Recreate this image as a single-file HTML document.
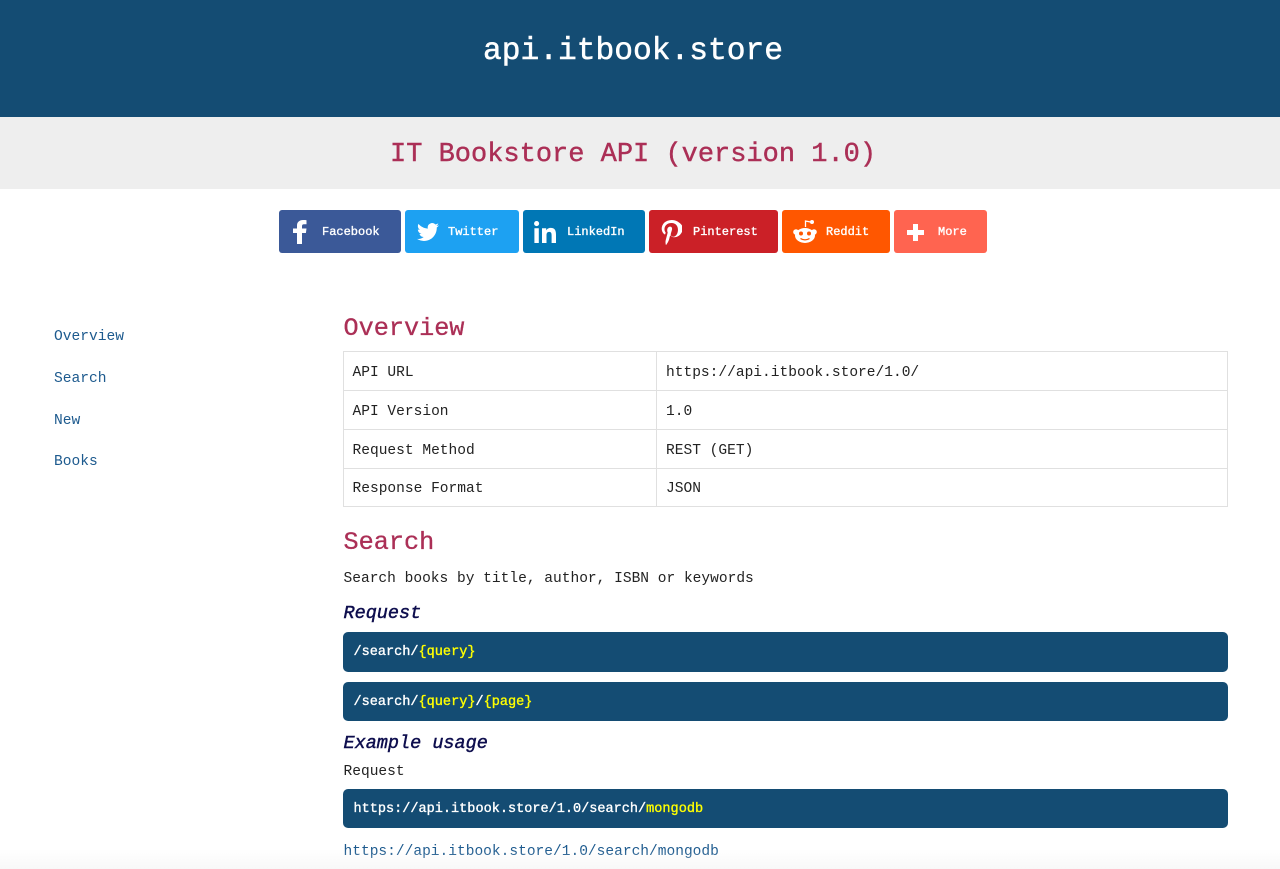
<!DOCTYPE html>
<html><head><meta charset="utf-8"><title>api.itbook.store</title>
<style>
*{box-sizing:border-box}
html,body{margin:0;padding:0;background:#fff;overflow:hidden}
body{width:1280px;height:869px;position:relative;font-family:"Liberation Mono",monospace;color:#333}
.a{position:absolute;white-space:pre;line-height:1}
.box{position:absolute}
.btn{position:absolute;top:210px;height:43px;border-radius:3px}
.btn span{position:absolute;top:15.5px;font-size:12px;line-height:12px;font-weight:normal;-webkit-text-stroke:.35px #fff;color:#fff;white-space:pre}
.btn svg{position:absolute;fill:#fff}
.nav{left:54px;font-size:14.6px;color:#1d5a8e}
h2{margin:0;position:absolute;left:343.5px;font-size:25.2px;line-height:1;font-weight:normal;color:#ab2f56;-webkit-text-stroke:.3px #ab2f56}
h3{margin:0;position:absolute;left:343.5px;font-size:18.5px;line-height:1;font-weight:normal;font-style:italic;color:#0d0d4d;-webkit-text-stroke:.45px #0d0d4d}
.t{font-size:14.55px;color:#222}
.code{position:absolute;left:343px;width:885px;background:#144c73;border-radius:5px}
.code span{position:absolute;left:10.5px;font-size:13.55px;line-height:14px;font-weight:normal;-webkit-text-stroke:.35px #fff;color:#fff;white-space:pre}
.code b{color:#ffff00;-webkit-text-stroke:.35px #ffff00;font-weight:normal}
.h{position:absolute;background:#e0e0e0;height:1px;left:343px;width:885px}
.v{position:absolute;background:#e0e0e0;width:1px;top:351px;height:156px}
</style></head><body>
<div class="box" style="left:0;top:0;width:1280px;height:117px;background:#144c73"></div>
<div class="a" style="left:483px;top:36px;font-size:31.25px;color:#fff;-webkit-text-stroke:.5px #fff">api.itbook.store</div>
<div class="box" style="left:0;top:117px;width:1280px;height:72px;background:#eee"></div>
<div class="a" style="left:390px;top:142px;font-size:27px;color:#ab2f56;-webkit-text-stroke:.4px #ab2f56">IT Bookstore API (version 1.0)</div>

<div class="btn" style="left:279px;width:122px;background:#3b5998">
<svg style="left:14px;top:10px" width="14" height="24" viewBox="0 0 14 24"><path d="M4 24V13H0V8.500h4V5.500C4 2 6.500 0 10 0c1.500 0 3 .1 3.500.2v4H11c-1.500 0-2 .8-2 2V8.500h4.500l-.6 4.500H9v11z"/></svg>
<span style="left:43px">Facebook</span></div>
<div class="btn" style="left:405px;width:114px;background:#1da1f2">
<svg style="left:12px;top:11px" width="22" height="22" viewBox="0 0 24 24"><path d="M23.950 4.570a10 10 0 0 1-2.820.77 4.960 4.960 0 0 0 2.160-2.720c-.95.550-2 .96-3.130 1.190a4.920 4.920 0 0 0-8.380 4.480C7.690 8.090 4.070 6.130 1.640 3.160a4.820 4.820 0 0 0-.67 2.480c0 1.710.87 3.210 2.190 4.100a4.900 4.900 0 0 1-2.230-.62v.06c0 2.390 1.700 4.380 3.950 4.830a5 5 0 0 1-2.210.08 4.940 4.940 0 0 0 4.610 3.420A9.870 9.870 0 0 1 0 19.540a14 14 0 0 0 7.560 2.210c9.050 0 14-7.500 14-13.980 0-.21 0-.42-.02-.63a9.900 9.900 0 0 0 2.410-2.570z"/></svg>
<span style="left:43px">Twitter</span></div>
<div class="btn" style="left:523px;width:122px;background:#0077b5">
<svg style="left:11px;top:11px" width="22" height="22" viewBox="0 0 22 22"><path d="M.4 7.300h4.400V22H.4zM2.600 0a2.500 2.500 0 1 1 0 5.100 2.500 2.500 0 0 1 0-5.100zM8 7.300h4.200v2h.1c.6-1.100 2.100-2.400 4.300-2.400 4.600 0 5.400 3 5.400 7V22h-4.400v-7.200c0-1.700 0-3.900-2.400-3.900s-2.700 1.800-2.700 3.800V22H8z"/></svg>
<span style="left:44px">LinkedIn</span></div>
<div class="btn" style="left:649px;width:129px;background:#cb2027">
<svg style="left:12px;top:9.500px" width="21" height="25" viewBox="0 0 21 25"><path d="M10.900 0C4.300 0 .7 4.200.7 8.800c0 2.100 1.200 4.800 3 5.600.5.200.5 0 .9-1.700 0-.1 0-.3-.1-.4C2 9.200 4 3 10.500 3c9.200 0 7.500 13.700 1.600 13.700-1.500 0-2.700-1.200-2.300-2.800.4-1.800 1.300-3.800 1.300-5.100 0-3.300-4.900-2.800-4.900 1.500 0 1.400.5 2.300.5 2.300S5 19 4.700 20.300c-.5 2.100.1 4.300.1 4.500.1.200.3.200.4.100.2-.2 2.300-3.200 2.900-5.500.2-.8 1.100-4.200 1.100-4.200.6 1.100 2.200 2 3.900 2 5.200 0 8.900-4.600 8.900-10.100C20 3.100 15.500 0 10.900 0z"/></svg>
<span style="left:44px">Pinterest</span></div>
<div class="btn" style="left:782px;width:108px;background:#ff5700">
<svg style="left:11px;top:9px" width="24" height="25" viewBox="0 0 24 25"><path d="M12.500 8V2l5 1" fill="none" stroke="#fff" stroke-width="1.300"/><circle cx="19" cy="3" r="2"/><ellipse cx="12" cy="16.500" rx="10" ry="7.500"/><circle cx="3" cy="13" r="2.800"/><circle cx="21" cy="13" r="2.800"/><circle cx="8" cy="14.500" r="2" fill="#ff5700"/><circle cx="16" cy="14.500" r="2" fill="#ff5700"/><path d="M7.500 19.500c2.500 1.800 6.500 1.800 9 0" fill="none" stroke="#ff5700" stroke-width="1.300"/></svg>
<span style="left:44px">Reddit</span></div>
<div class="btn" style="left:894px;width:93px;background:#ff6450">
<svg style="left:13px;top:13.500px" width="17" height="17" viewBox="0 0 17 17"><path d="M6 0h5v6h6v5h-6v6H6v-6H0V6h6z"/></svg>
<span style="left:44px">More</span></div>

<div class="a nav" style="top:330px">Overview</div>
<div class="a nav" style="top:372px">Search</div>
<div class="a nav" style="top:414px">New</div>
<div class="a nav" style="top:455px">Books</div>

<h2 style="top:316px">Overview</h2>
<div class="h" style="top:351px"></div><div class="h" style="top:390px"></div><div class="h" style="top:429px"></div><div class="h" style="top:468px"></div><div class="h" style="top:506px"></div>
<div class="v" style="left:343px"></div><div class="v" style="left:656px"></div><div class="v" style="left:1227px"></div>
<div class="a t" style="left:352.500px;top:366px">API URL</div>
<div class="a t" style="left:666px;top:366px">https://api.itbook.store/1.0/</div>
<div class="a t" style="left:352.500px;top:405px">API Version</div>
<div class="a t" style="left:666px;top:405px">1.0</div>
<div class="a t" style="left:352.500px;top:444px">Request Method</div>
<div class="a t" style="left:666px;top:444px">REST (GET)</div>
<div class="a t" style="left:352.500px;top:482px">Response Format</div>
<div class="a t" style="left:666px;top:482px">JSON</div>

<h2 style="top:530px">Search</h2>
<div class="a t" style="left:343.500px;top:572px">Search books by title, author, ISBN or keywords</div>
<h3 style="top:604.500px">Request</h3>
<div class="code" style="top:632px;height:40px"><span style="top:14px">/search/<b>{query}</b></span></div>
<div class="code" style="top:682px;height:39px"><span style="top:14px">/search/<b>{query}</b>/<b>{page}</b></span></div>
<h3 style="top:734.500px">Example usage</h3>
<div class="a t" style="left:343.500px;top:765px">Request</div>
<div class="code" style="top:789px;height:39px"><span style="top:14px">https://api.itbook.store/1.0/search/<b>mongodb</b></span></div>
<div class="a t" style="left:343.500px;top:845px;color:#1d5a8e">https://api.itbook.store/1.0/search/mongodb</div>
<div class="box" style="left:0;top:849px;width:1280px;height:20px;background:linear-gradient(rgba(240,240,240,0),rgba(240,240,240,.45));pointer-events:none"></div>
</body></html>
